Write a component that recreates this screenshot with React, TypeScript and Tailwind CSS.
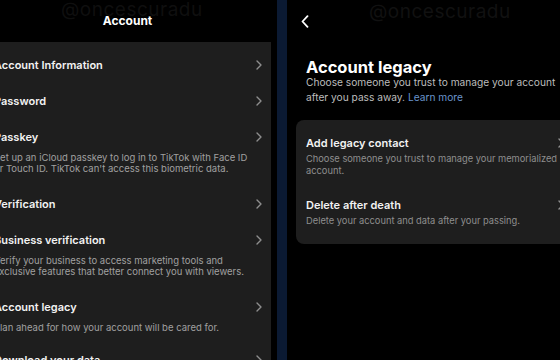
import React from "react";

const font = { fontFamily: "Inter, 'Noto Sans', sans-serif" };

const Chevron: React.FC<{ className?: string }> = ({ className }) => (
  <svg width="6" height="10" viewBox="0 0 6 10" className={className} fill="none">
    <path d="M1 1l4 4-4 4" stroke="currentColor" strokeWidth="1.4" strokeLinecap="round" strokeLinejoin="round" />
  </svg>
);

interface Row {
  title: string;
  desc?: string[];
}

const rows: Row[] = [
  { title: "Account Information" },
  { title: "Password" },
  {
    title: "Passkey",
    desc: [
      "Set up an iCloud passkey to log in to TikTok with Face ID",
      "or Touch ID. TikTok can't access this biometric data.",
    ],
  },
  { title: "Verification" },
  {
    title: "Business verification",
    desc: [
      "Verify your business to access marketing tools and",
      "exclusive features that better connect you with viewers.",
    ],
  },
  { title: "Account legacy", desc: ["Plan ahead for how your account will be cared for."] },
  { title: "Download your data" },
];

const SettingRow: React.FC<{ row: Row }> = ({ row }) => (
  <div className={`flex items-start pr-[9px] pt-[9px] ${row.desc ? (row.desc.length > 1 ? "pb-[12px]" : "pb-[9px]") : "pb-[9px]"}`}>
    <div className="flex-1 ml-[-6px]">
      <div className="h-[18px] leading-[18px] text-[11px] font-semibold text-[#f2f2f2] whitespace-nowrap">
        {row.title}
      </div>
      {row.desc && (
        <div className="mt-[6px] text-[9.5px] leading-[11px] text-[#a0a0a0] whitespace-nowrap">
          {row.desc.map((d) => (
            <div key={d}>{d}</div>
          ))}
        </div>
      )}
    </div>
    <div className="h-[18px] flex items-center">
      <Chevron className="text-[#8e8e8e]" />
    </div>
  </div>
);

export default function App() {
  return (
    <div className="relative flex w-[560px] h-[360px] overflow-hidden bg-black" style={font}>
      {/* left screen */}
      <div className="relative w-[271px] flex flex-col shrink-0">
        <div className="absolute left-[61px] top-[-4px] text-[19px] text-[#0f0f0f] tracking-[0.5px]">@oncescuradu</div>
        <div className="relative h-[42px] flex items-center justify-center pr-[16px] text-[12px] font-bold text-white">
          Account
        </div>
        <div className="flex-1 bg-[#1e1e1e] pt-[5px] overflow-hidden">
          {rows.map((r) => (
            <SettingRow key={r.title} row={r} />
          ))}
        </div>
      </div>

      <div className="w-[6px] shrink-0" />
      <div className="w-[10px] shrink-0 bg-[#0b1a33]" />

      {/* right screen */}
      <div className="relative flex-1 flex flex-col pl-[9px]">
        <div className="absolute left-[82px] top-[-2px] text-[19px] text-[#111111] tracking-[0.5px]">@oncescuradu</div>
        <div className="relative h-[42px] flex items-center pl-[5px]">
          <svg width="8" height="13" viewBox="0 0 8 13" fill="none">
            <path d="M6.5 1.2L1.5 6.5l5 5.3" stroke="white" strokeWidth="1.8" strokeLinecap="round" strokeLinejoin="round" />
          </svg>
        </div>
        <div className="pl-[10px] mt-[16px] h-[18px] leading-[18px] text-[16.5px] font-bold text-white whitespace-nowrap">
          Account legacy
        </div>
        <div className="pl-[10px] mt-[-1px] text-[10.2px] leading-[15px] text-[#bdbdbd] whitespace-nowrap">
          <div>Choose someone you trust to manage your account</div>
          <div>
            after you pass away. <span className="text-[#6a94cc]">Learn more</span>
          </div>
        </div>
        <div className="mt-[15px] w-[280px] shrink-0 rounded-[8px] bg-[#1e1e1e] pl-[10px] pr-[12px] pt-[14px] pb-[17px]">
          <div className="flex items-start">
            <div className="flex-1">
              <div className="h-[18px] leading-[18px] text-[11px] font-semibold text-[#f2f2f2]">Add legacy contact</div>
              <div className="mt-[1px] text-[9.3px] leading-[12px] text-[#8e8e8e] whitespace-nowrap">
                <div>Choose someone you trust to manage your memorialized</div>
                <div>account.</div>
              </div>
            </div>
            <div className="h-[18px] flex items-center">
              <Chevron className="text-[#8e8e8e]" />
            </div>
          </div>
          <div className="flex items-start mt-[19px]">
            <div className="flex-1">
              <div className="h-[18px] leading-[18px] text-[11px] font-semibold text-[#f2f2f2]">Delete after death</div>
              <div className="mt-[1px] text-[9.3px] leading-[12px] text-[#8e8e8e] whitespace-nowrap">
                Delete your account and data after your passing.
              </div>
            </div>
            <div className="h-[18px] flex items-center">
              <Chevron className="text-[#8e8e8e]" />
            </div>
          </div>
        </div>
      </div>
    </div>
  );
}
